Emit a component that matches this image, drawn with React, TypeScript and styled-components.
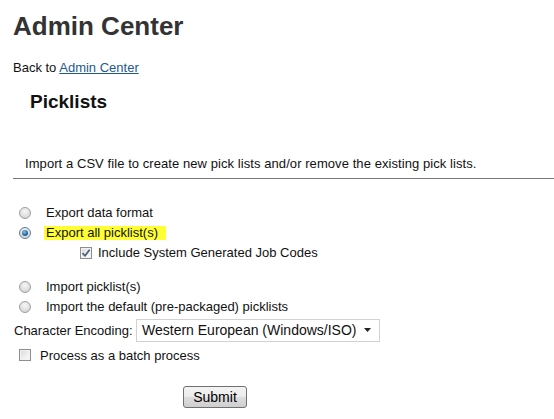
import React, { useState } from 'react';
import styled, { createGlobalStyle } from 'styled-components';

const GlobalStyle = createGlobalStyle`
  body {
    margin: 0;
    background: #fff;
    font-family: "Liberation Sans", Arial, sans-serif;
    color: #1a1a1a;
  }
`;

type Mode = 'format' | 'export' | 'import' | 'default';

const App = () => {
  const [mode, setMode] = useState<Mode>('export');
  const [includeSystem, setIncludeSystem] = useState(true);
  const [batch, setBatch] = useState(false);

  return (
    <Page>
      <GlobalStyle />
      <Title>Admin Center</Title>
      <BackLine>
        Back to <BackLink href="#">Admin Center</BackLink>
      </BackLine>
      <SubTitle>Picklists</SubTitle>
      <Description>Import a CSV file to create new pick lists and/or remove the existing pick lists.</Description>
      <Divider />

      <Options>
        <OptionRow onClick={() => setMode('format')}>
          <Radio $checked={mode === 'format'} />
          <OptionLabel>Export data format</OptionLabel>
        </OptionRow>
        <OptionRow onClick={() => setMode('export')}>
          <Radio $checked={mode === 'export'} />
          <OptionLabel $highlight>Export all picklist(s)</OptionLabel>
        </OptionRow>
        <SubOptionRow onClick={() => setIncludeSystem(!includeSystem)}>
          <Checkbox $checked={includeSystem}>
            {includeSystem && <CheckMark />}
          </Checkbox>
          <SubLabel>Include System Generated Job Codes</SubLabel>
        </SubOptionRow>

        <ImportGroup>
          <OptionRow onClick={() => setMode('import')}>
            <Radio $checked={mode === 'import'} />
            <OptionLabel>Import picklist(s)</OptionLabel>
          </OptionRow>
          <OptionRow onClick={() => setMode('default')}>
            <Radio $checked={mode === 'default'} />
            <OptionLabel>Import the default (pre-packaged) picklists</OptionLabel>
          </OptionRow>
        </ImportGroup>

        <EncodingRow>
          <EncodingLabel>Character Encoding:</EncodingLabel>
          <SelectBox>
            <SelectText>Western European (Windows/ISO)</SelectText>
            <svg width="7" height="4" viewBox="0 0 7 4">
              <path d="M0 0h7L3.5 4z" fill="#222" />
            </svg>
          </SelectBox>
        </EncodingRow>

        <BatchRow onClick={() => setBatch(!batch)}>
          <Checkbox $checked={batch}>{batch && <CheckMark />}</Checkbox>
          <BatchLabel>Process as a batch process</BatchLabel>
        </BatchRow>
      </Options>

      <SubmitButton type="button">Submit</SubmitButton>
    </Page>
  );
};

const CheckMark = () => (
  <svg width="10" height="10" viewBox="0 0 10 10">
    <path d="M1.5 5.2 L4 7.8 L8.6 1.8" fill="none" stroke="#4a5d80" strokeWidth="1.7" />
  </svg>
);

const Page = styled.div`
  padding: 11px 0 0 13px;
`;

const Title = styled.h1`
  margin: 0;
  font-size: 26px;
  line-height: 30px;
  font-weight: bold;
  color: #333;
`;

const BackLine = styled.div`
  margin-top: 19px;
  font-size: 13px;
  line-height: 16px;
  color: #111;
`;

const BackLink = styled.a`
  color: #1d5a8e;
  text-decoration: underline;
`;

const SubTitle = styled.h2`
  margin: 15px 0 0;
  padding-left: 17px;
  font-size: 19px;
  line-height: 22px;
  font-weight: bold;
  color: #111;
`;

const Description = styled.p`
  margin: 43px 0 0;
  padding-left: 12px;
  font-size: 13px;
  line-height: 16px;
  letter-spacing: 0.07px;
  color: #111;
`;

const Divider = styled.hr`
  margin: 6px 0 0;
  border: none;
  height: 1px;
  background: #7a7a7a;
`;

const Options = styled.div`
  margin-top: 24px;
  display: flex;
  flex-direction: column;
`;

const OptionRow = styled.label`
  display: flex;
  align-items: center;
  height: 20px;
  padding-left: 6px;
  cursor: pointer;
`;

const Radio = styled.span<{ $checked: boolean }>`
  position: relative;
  width: 12px;
  height: 12px;
  box-sizing: border-box;
  border-radius: 50%;
  border: 1px solid ${p => (p.$checked ? '#5a7ea3' : '#a0a0a0')};
  background: radial-gradient(circle at 50% 35%, #f6f6f6 0%, #dedede 60%, #c8c8c8 100%);
  flex-shrink: 0;

  &::after {
    content: '';
    display: ${p => (p.$checked ? 'block' : 'none')};
    position: absolute;
    left: 2px;
    top: 2px;
    width: 6px;
    height: 6px;
    border-radius: 50%;
    background: radial-gradient(circle at 40% 35%, #7cc4ee 0%, #2a6aa3 55%, #0e3560 100%);
  }
`;

const OptionLabel = styled.span<{ $highlight?: boolean }>`
  margin-left: 13px;
  padding: 0 ${p => (p.$highlight ? '8px' : '3px')} 0 2px;
  font-size: 13px;
  line-height: 14px;
  color: #111;
  background: ${p => (p.$highlight ? '#ffff33' : 'transparent')};
`;

const SubOptionRow = styled.label`
  display: flex;
  align-items: center;
  height: 19px;
  padding-left: 67px;
  cursor: pointer;
`;

const Checkbox = styled.span<{ $checked: boolean }>`
  display: flex;
  align-items: center;
  justify-content: center;
  width: 12px;
  height: 12px;
  box-sizing: border-box;
  border: 1px solid #8e8e8e;
  background: linear-gradient(135deg, #d8d8d8 0%, #f0f0f0 60%, #ffffff 100%);
  box-shadow: inset 0 0 0 1px #f2f2f2;
  flex-shrink: 0;
`;

const SubLabel = styled.span`
  margin-left: 6px;
  font-size: 13px;
  color: #111;
`;

const ImportGroup = styled.div`
  margin-top: 15px;
  display: flex;
  flex-direction: column;
`;

const EncodingRow = styled.div`
  display: flex;
  align-items: center;
  height: 24px;
  margin-top: 1px;
`;

const EncodingLabel = styled.span`
  font-size: 13px;
  color: #111;
  padding-left: 1px;
  width: 122px;
`;

const SelectBox = styled.div`
  display: flex;
  align-items: center;
  justify-content: space-between;
  width: 244px;
  height: 23px;
  box-sizing: border-box;
  padding: 0 8px 0 5px;
  border: 1px solid #d2d2d2;
  background: #fff;
  cursor: pointer;
`;

const SelectText = styled.span`
  font-size: 14px;
  color: #111;
`;

const BatchRow = styled.label`
  display: flex;
  align-items: center;
  height: 20px;
  margin-top: 3px;
  padding-left: 6px;
  cursor: pointer;
`;

const BatchLabel = styled.span`
  margin-left: 9px;
  font-size: 13px;
  color: #111;
`;

const SubmitButton = styled.button`
  display: block;
  margin: 21px 0 0 170px;
  width: 64px;
  height: 22px;
  padding: 0;
  border: 1px solid #707070;
  border-radius: 3px;
  background: linear-gradient(to bottom, #f3f3f3 0%, #ebebeb 50%, #dddddd 51%, #cfcfcf 100%);
  font-family: "Liberation Sans", Arial, sans-serif;
  font-size: 14px;
  color: #000;
  cursor: pointer;
`;

export default App;
